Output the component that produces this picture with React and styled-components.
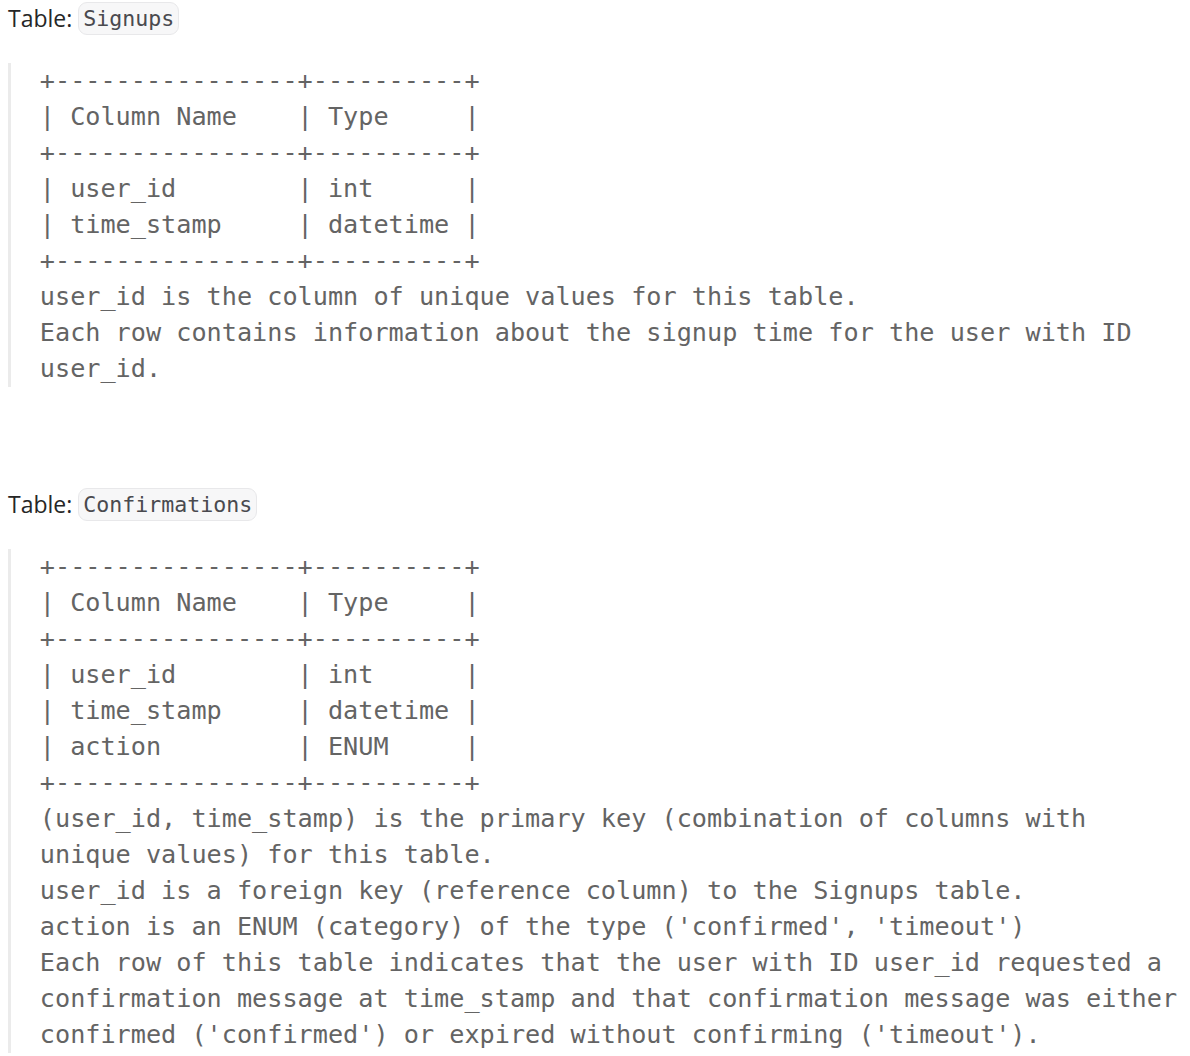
import styled, { createGlobalStyle } from "styled-components";

const GlobalStyle = createGlobalStyle`
  body {
    margin: 0;
    background: #fff;
  }
`;

const Page = styled.div`
  // .description
  padding: 0 0 0 8px;
  font-family: "Open Sans", "Noto Sans", sans-serif;
  font-size: 23px;
  color: #262626;
`;

const Para = styled.p`
  margin: 0 0 ${(p) => p.$after}px;
  line-height: 36px;
  height: 36px;
  display: flex;
  align-items: center;
  gap: 6px;
`;

const Code = styled.code`
  font-family: "DejaVu Sans Mono", monospace;
  font-size: 21.6px;
  line-height: 31px;
  color: #4a4a4f;
  background: #f7f7f8;
  border: 1px solid #e8e8ea;
  border-radius: 9px;
  padding: 0 4px;
`;

const Pre = styled.pre`
  margin: 0 0 ${(p) => p.$after}px;
  padding: 0 0 0 28.8px;
  border-left: 3.6px solid #ebebeb;
  font-family: "DejaVu Sans Mono", monospace;
  font-size: 25.2px;
  line-height: 36px;
  color: #646464;
  white-space: pre;
  overflow: hidden;
`;

const signups = `+----------------+----------+
| Column Name    | Type     |
+----------------+----------+
| user_id        | int      |
| time_stamp     | datetime |
+----------------+----------+
user_id is the column of unique values for this table.
Each row contains information about the signup time for the user with ID
user_id.`;

const confirmations = `+----------------+----------+
| Column Name    | Type     |
+----------------+----------+
| user_id        | int      |
| time_stamp     | datetime |
| action         | ENUM     |
+----------------+----------+
(user_id, time_stamp) is the primary key (combination of columns with
unique values) for this table.
user_id is a foreign key (reference column) to the Signups table.
action is an ENUM (category) of the type ('confirmed', 'timeout')
Each row of this table indicates that the user with ID user_id requested a
confirmation message at time_stamp and that confirmation message was either
confirmed ('confirmed') or expired without confirming ('timeout').`;

function TableSchema({ name, schema, after }) {
  return (
    <>
      <Para $after={27}>
        Table:<Code>{name}</Code>
      </Para>
      <Pre $after={after}>{schema}</Pre>
    </>
  );
}

export default function App() {
  return (
    <>
      <GlobalStyle />
      <Page>
        <TableSchema name="Signups" schema={signups} after={99} />
        <TableSchema name="Confirmations" schema={confirmations} after={0} />
      </Page>
    </>
  );
}
